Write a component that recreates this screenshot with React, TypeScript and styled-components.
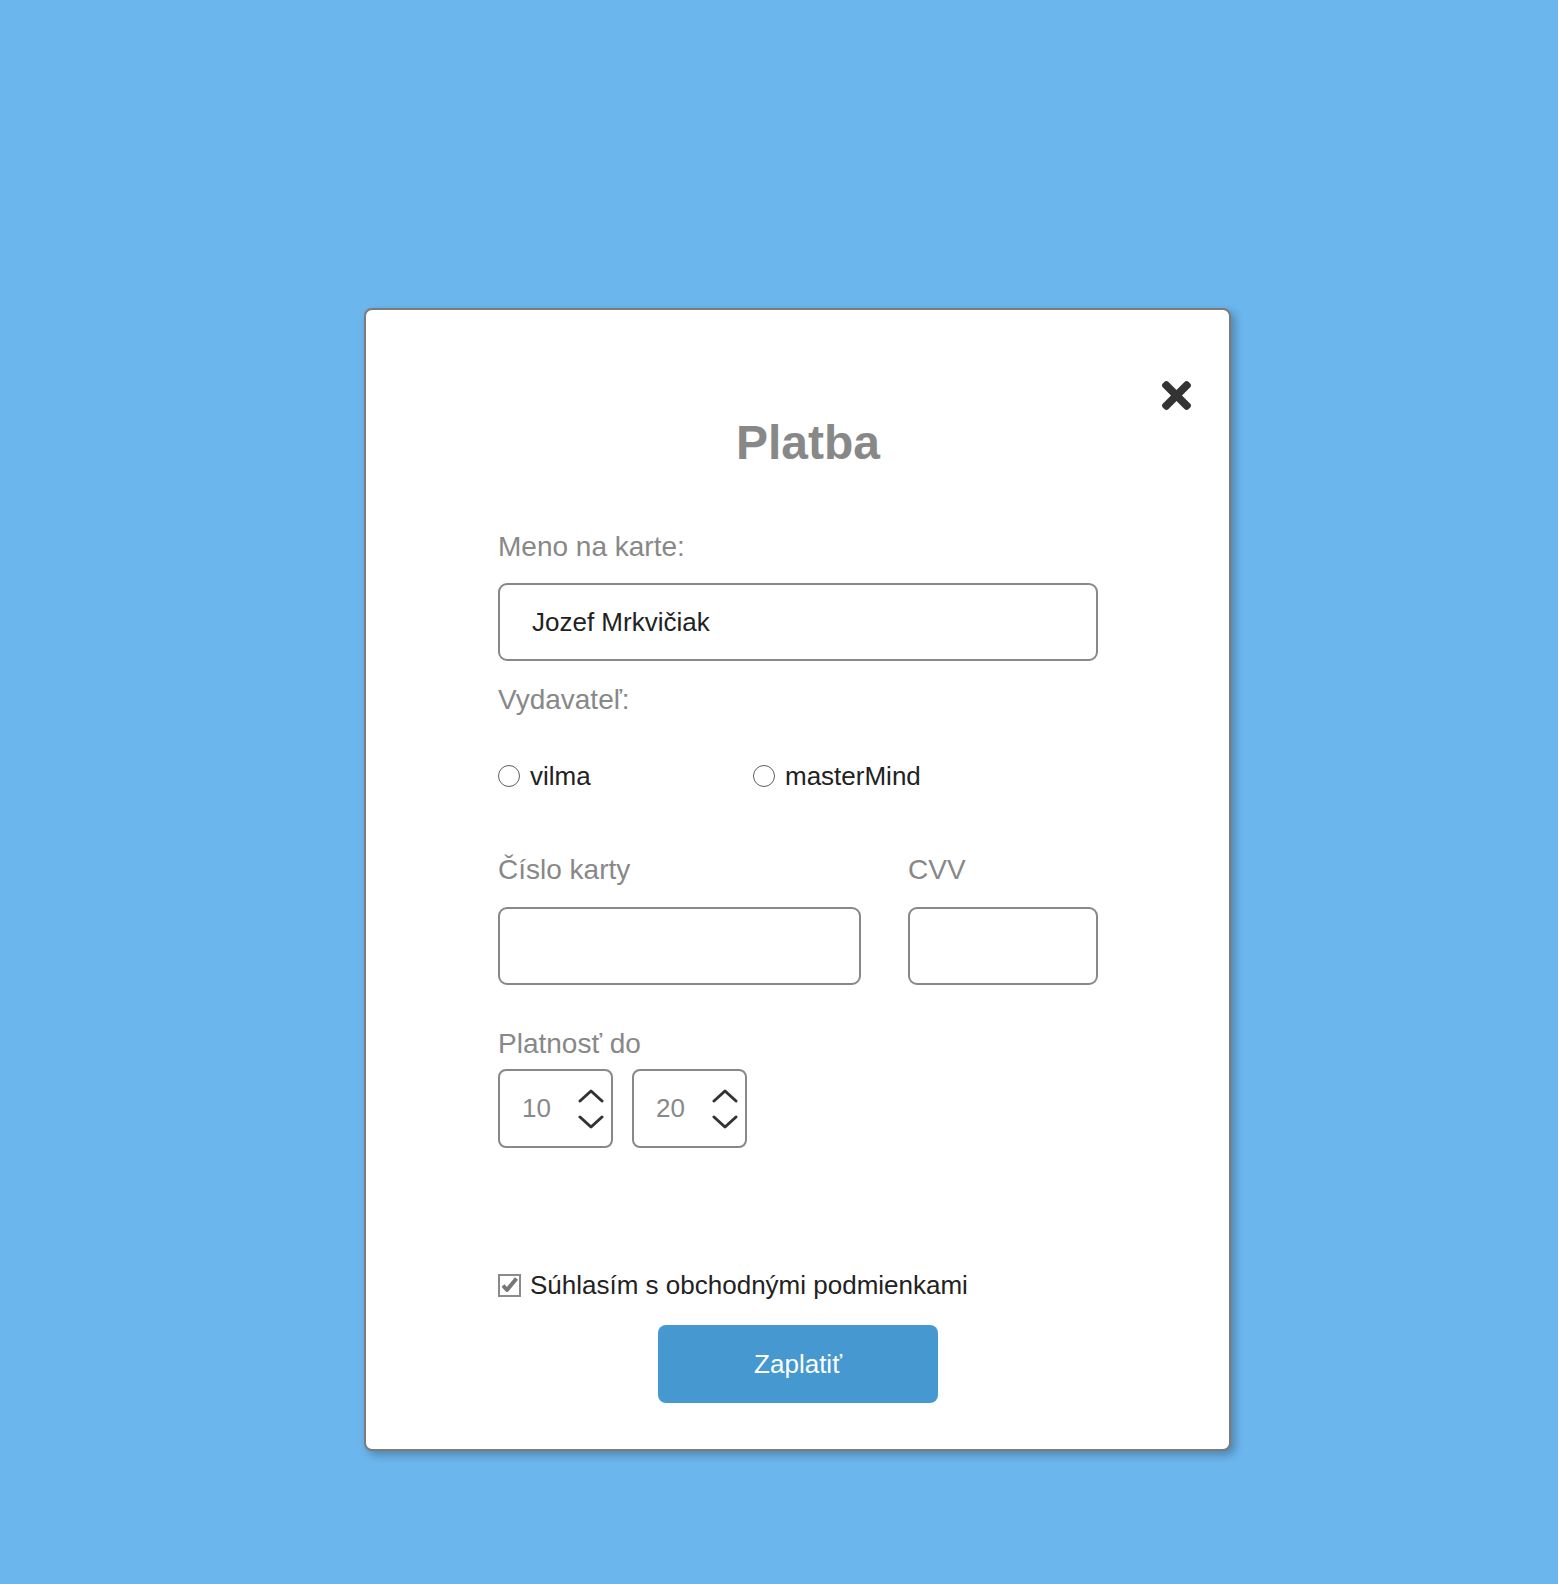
import React from "react";
import styled, { createGlobalStyle } from "styled-components";

const GlobalStyle = createGlobalStyle`
  html, body {
    margin: 0;
    padding: 0;
    background: #6cb6ee;
  }
  body {
    font-family: "Liberation Sans", Arial, Helvetica, sans-serif;
  }
`;

const Page = styled.div`
  min-height: 100vh;
  box-sizing: border-box;
  padding: 308px 0 40px 364px;
  background: #6cb6ee;
`;

const Card = styled.div`
  position: relative;
  width: 867px;
  box-sizing: border-box;
  padding: 105px 131px 46px 132px;
  background: #ffffff;
  border: 2px solid #7b7b7b;
  border-radius: 8px;
  box-shadow: 4px 4px 10px rgba(0, 0, 0, 0.28);
  display: flex;
  flex-direction: column;
`;

const CloseButton = styled.button`
  position: absolute;
  top: 70px;
  right: 38px;
  width: 30px;
  height: 30px;
  padding: 0;
  border: none;
  background: transparent;
  display: flex;
  align-items: center;
  justify-content: center;
  cursor: pointer;
`;

const Title = styled.h1`
  margin: 0;
  padding-left: 20px;
  font-size: 48px;
  line-height: 56px;
  font-weight: 700;
  color: #888888;
  text-align: center;
`;

const Label = styled.div<{ $mt?: number }>`
  margin-top: ${(p) => p.$mt ?? 0}px;
  font-size: 28px;
  line-height: 32px;
  color: #888888;
`;

const TextInput = styled.input<{ $mt?: number }>`
  margin-top: ${(p) => p.$mt ?? 0}px;
  width: 100%;
  height: 78px;
  box-sizing: border-box;
  padding: 0 32px;
  border: 2px solid #888888;
  border-radius: 9px;
  font-family: inherit;
  font-size: 26px;
  color: #222222;
  background: #fff;
  outline: none;
`;

const RadioRow = styled.div`
  margin-top: 45px;
  display: grid;
  grid-template-columns: 255px auto;
  height: 30px;
  align-items: center;
`;

const Option = styled.label`
  display: flex;
  align-items: center;
  gap: 10px;
  font-size: 26px;
  line-height: 30px;
  color: #222222;
`;

const RadioCircle = styled.span`
  width: 22px;
  height: 22px;
  box-sizing: border-box;
  border: 1.5px solid #5e5e5e;
  border-radius: 50%;
  background: #fff;
`;

const CardRow = styled.div`
  margin-top: 63px;
  display: grid;
  grid-template-columns: 1fr 190px;
  column-gap: 47px;
`;

const Column = styled.div`
  display: flex;
  flex-direction: column;
`;

const SpinRow = styled.div`
  margin-top: 9px;
  display: flex;
  gap: 19px;
`;

const Spinner = styled.div`
  width: 115px;
  height: 79px;
  box-sizing: border-box;
  border: 2px solid #888888;
  border-radius: 8px;
  display: flex;
  align-items: center;
  padding: 0 7px 0 22px;
`;

const SpinValue = styled.span`
  font-size: 26px;
  color: #888888;
`;

const Arrows = styled.div`
  margin-left: auto;
  display: flex;
  flex-direction: column;
  gap: 12px;
  padding-top: 1px;
`;

const CheckRow = styled.label`
  margin-top: 122px;
  height: 30px;
  display: flex;
  align-items: center;
  gap: 9px;
  font-size: 26px;
  color: #222222;
`;

const CheckBox = styled.span`
  width: 23px;
  height: 23px;
  box-sizing: border-box;
  border: 2px solid #8a8a8a;
  background: #fff;
  display: flex;
  align-items: center;
  justify-content: center;
`;

const PayButton = styled.button`
  margin: 25px auto 0;
  width: 280px;
  height: 78px;
  border: none;
  border-radius: 8px;
  background: #4699d0;
  color: #ffffff;
  font-family: inherit;
  font-size: 26px;
  cursor: pointer;
`;

const Chevron = ({ up }: { up?: boolean }) => (
  <svg width="26" height="14" viewBox="0 0 26 14">
    <polyline
      points={up ? "2,12 13,2 24,12" : "2,2 13,12 24,2"}
      fill="none"
      stroke="#333"
      strokeWidth="3"
      strokeLinecap="round"
      strokeLinejoin="round"
    />
  </svg>
);

const NumberSpin = ({ value }: { value: string }) => (
  <Spinner>
    <SpinValue>{value}</SpinValue>
    <Arrows>
      <Chevron up />
      <Chevron />
    </Arrows>
  </Spinner>
);

export default function App() {
  return (
    <Page>
      <GlobalStyle />
      <Card>
        <CloseButton aria-label="Zavrieť">
          <svg width="29" height="29" viewBox="0 80 352 352">
            <path
              fill="#333"
              d="M242.72 256l100.07-100.07c12.28-12.28 12.28-32.19 0-44.48l-22.24-22.24c-12.28-12.28-32.19-12.28-44.48 0L176 189.28 75.930 89.21c-12.28-12.28-32.19-12.28-44.48 0L9.21 111.45c-12.28 12.28-12.28 32.19 0 44.48L109.28 256 9.21 356.07c-12.28 12.28-12.28 32.19 0 44.48l22.24 22.24c12.28 12.28 32.2 12.28 44.48 0L176 322.72l100.07 100.070c12.28 12.28 32.2 12.28 44.48 0l22.24-22.24c12.28-12.28 12.28-32.19 0-44.48L242.72 256z"
            />
          </svg>
        </CloseButton>

        <Title>Platba</Title>

        <Label $mt={60}>Meno na karte:</Label>
        <TextInput $mt={20} defaultValue="Jozef Mrkvičiak" />

        <Label $mt={23}>Vydavateľ:</Label>
        <RadioRow>
          <Option>
            <RadioCircle />
            vilma
          </Option>
          <Option>
            <RadioCircle />
            masterMind
          </Option>
        </RadioRow>

        <CardRow>
          <Column>
            <Label>Číslo karty</Label>
            <TextInput $mt={21} />
          </Column>
          <Column>
            <Label>CVV</Label>
            <TextInput $mt={21} />
          </Column>
        </CardRow>

        <Label $mt={43}>Platnosť do</Label>
        <SpinRow>
          <NumberSpin value="10" />
          <NumberSpin value="20" />
        </SpinRow>

        <CheckRow>
          <CheckBox>
            <svg width="17" height="16" viewBox="0 0 17 16">
              <path
                d="M2 8.5 L6 13 L15.5 1.5"
                fill="none"
                stroke="#777"
                strokeWidth="4"
                strokeLinejoin="round"
              />
            </svg>
          </CheckBox>
          Súhlasím s obchodnými podmienkami
        </CheckRow>

        <PayButton>Zaplatiť</PayButton>
      </Card>
    </Page>
  );
}
